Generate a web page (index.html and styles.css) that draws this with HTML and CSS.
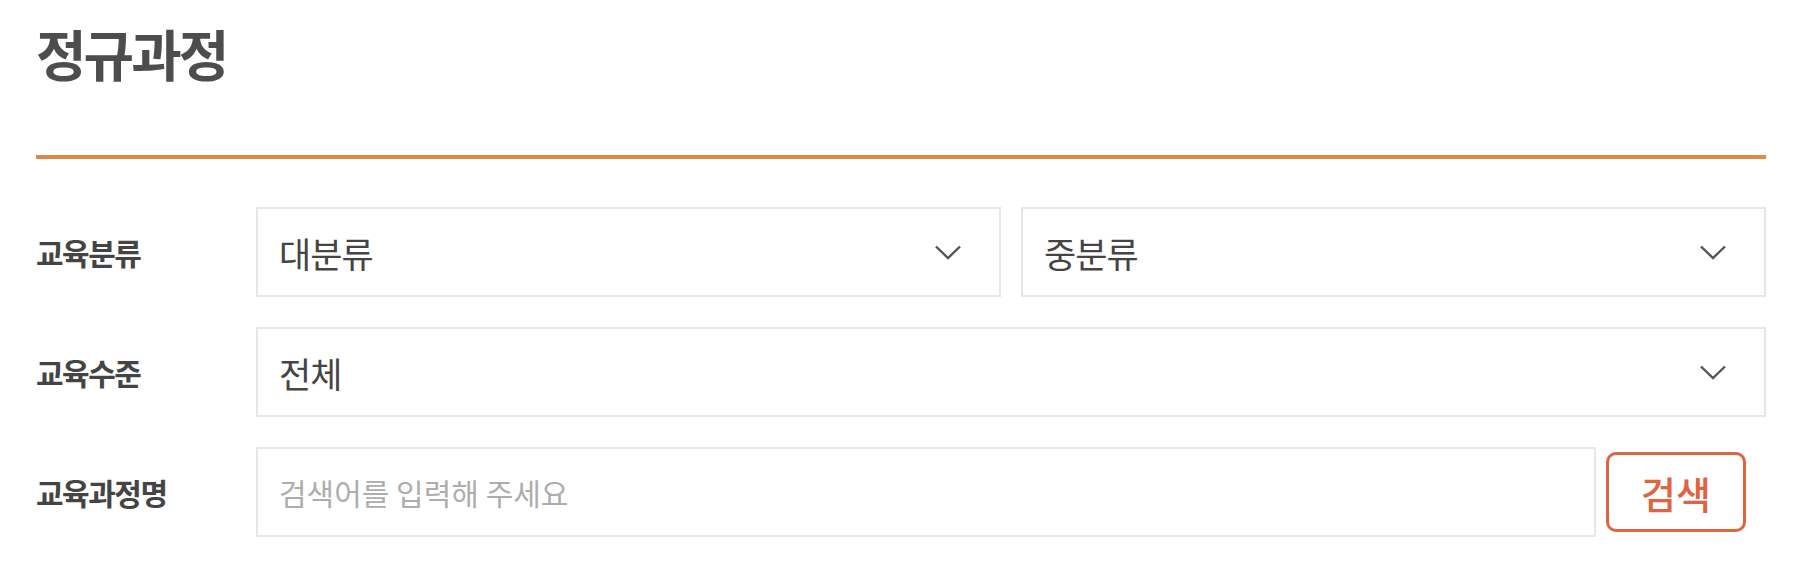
FILE: index.html
```html
<html>
<head>
    <meta charset="utf-8">
    <title>정규과정</title>
    <link rel="stylesheet" href="styles.css">
</head>
<body>

    <div id="mainCont">
        <h2 id="pageTitle">정규과정</h2>

        <div id="searchForm">
            <div class="formRow">
                <div class="rowLabel">교육분류</div>
                <div class="rowFields">
                    <div class="selectBox">
                        <span class="selectValue">대분류</span>
                        <svg class="chevron" viewBox="0 0 26 15"><path d="M1 1.5 L13 13 L25 1.5"/></svg>
                    </div>
                    <div class="selectBox">
                        <span class="selectValue">중분류</span>
                        <svg class="chevron" viewBox="0 0 26 15"><path d="M1 1.5 L13 13 L25 1.5"/></svg>
                    </div>
                </div>
            </div>

            <div class="formRow">
                <div class="rowLabel">교육수준</div>
                <div class="rowFields">
                    <div class="selectBox">
                        <span class="selectValue">전체</span>
                        <svg class="chevron" viewBox="0 0 26 15"><path d="M1 1.5 L13 13 L25 1.5"/></svg>
                    </div>
                </div>
            </div>

            <div class="formRow">
                <div class="rowLabel">교육과정명</div>
                <div class="rowFields">
                    <input type="text" id="courseName" class="textBox" placeholder="검색어를 입력해 주세요">
                    <button type="button" id="searchButton">검색</button>
                </div>
            </div>
        </div>
    </div>

</body>
</html>
```

FILE: styles.css
```css
body {
    margin: 0;
    background-color: #ffffff;
    font-family: "Noto Sans CJK KR", "Noto Sans", sans-serif;
    color: #444444;
}

#mainCont {
    width: 1730px;
    padding-left: 36px;
}

#pageTitle {
    margin: 0;
    padding-top: 12px;
    height: 159px;
    box-sizing: border-box;
    border-bottom: 4px solid #dc8a45;
    font-size: 55px;
    font-weight: 700;
    letter-spacing: -3px;
    line-height: 80px;
    color: #4d4d4d;
}

#searchForm {
    display: flex;
    flex-direction: column;
    gap: 30px;
    padding-top: 48px;
}

.formRow {
    display: flex;
    align-items: center;
    height: 90px;
}

.rowLabel {
    width: 220px;
    flex-shrink: 0;
    font-size: 30px;
    font-weight: 700;
    letter-spacing: -1.5px;
    color: #444444;
}

.rowFields {
    flex: 1;
    display: flex;
    align-items: center;
    gap: 20px;
    height: 100%;
}

.selectBox {
    flex: 1;
    height: 100%;
    box-sizing: border-box;
    border: 2px solid #e6e6e6;
    display: flex;
    align-items: center;
    justify-content: space-between;
    padding: 0 38px 0 21px;
}

.selectValue {
    font-size: 35px;
    letter-spacing: -1px;
    color: #444444;
}

.chevron {
    width: 26px;
    height: 15px;
    fill: none;
    stroke: #555555;
    stroke-width: 2.4;
}

.textBox {
    flex: 1;
    height: 100%;
    box-sizing: border-box;
    border: 2px solid #e6e6e6;
    outline: none;
    padding: 0 21px;
    font-family: "Noto Sans CJK KR", "Noto Sans", sans-serif;
    font-size: 30px;
    color: #444444;
}

.textBox::placeholder {
    color: #adadad;
}

#searchButton {
    width: 140px;
    height: 80px;
    margin-left: -10px;
    margin-right: 20px;
    box-sizing: border-box;
    background-color: #ffffff;
    border: 3px solid #df6441;
    border-radius: 10px;
    font-family: "Noto Sans CJK KR", "Noto Sans", sans-serif;
    font-size: 38px;
    font-weight: 500;
    color: #df6441;
    padding: 0;
}
```
